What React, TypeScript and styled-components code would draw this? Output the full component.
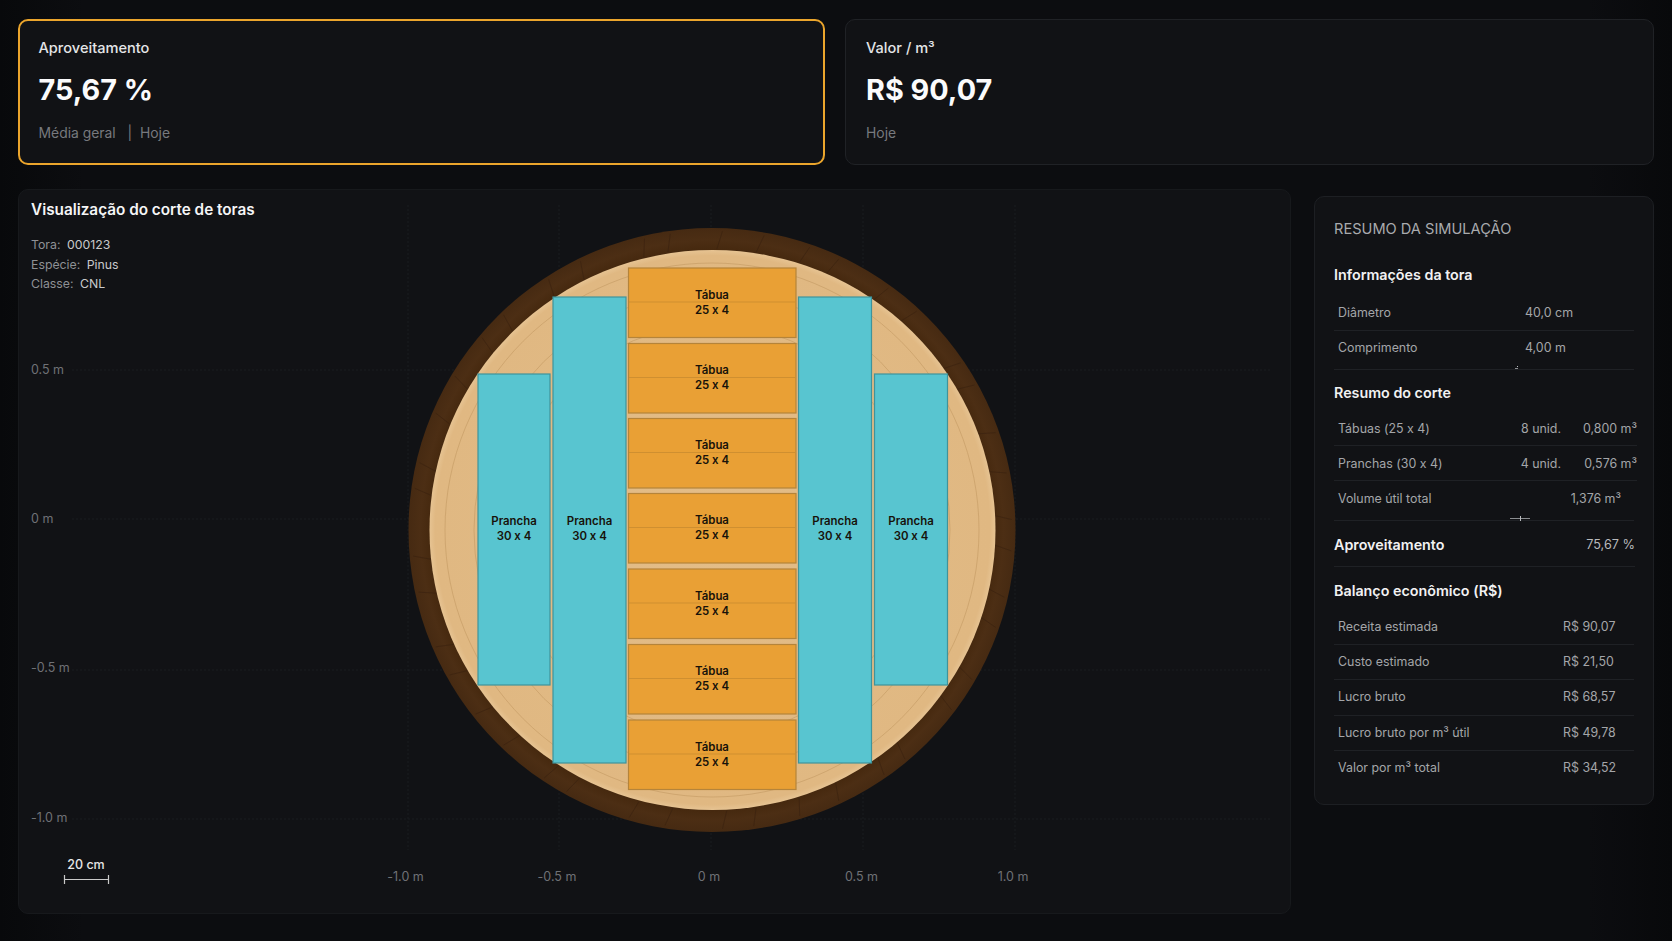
import React from 'react';
import styled, { createGlobalStyle } from 'styled-components';

const FONT = "Inter, 'Liberation Sans', sans-serif";

const GlobalStyle = createGlobalStyle`
  html, body {
    margin: 0;
    height: 100%;
    background: #0a0b0d;
    overflow: hidden;
  }
`;

const CX = 712;
const CY = 530;

const TABUAS = [268, 343.5, 418.5, 493.5, 569, 644.5, 720];
const PRANCHAS = [
  { x: 478, y: 374, w: 72, h: 311 },
  { x: 553, y: 297, w: 73, h: 466 },
  { x: 798.5, y: 297, w: 73, h: 466 },
  { x: 874.5, y: 374, w: 73, h: 311 },
];
const H_GRID = [
  { y: 370, ly: 371, label: '0.5 m' },
  { y: 519, ly: 520, label: '0 m' },
  { y: 670, ly: 669, label: '-0.5 m' },
  { y: 819, ly: 818.5, label: '-1.0 m' },
];
const V_GRID = [
  { x: 408, lx: 405.5, label: '-1.0 m' },
  { x: 559, lx: 557, label: '-0.5 m' },
  { x: 711, lx: 709, label: '0 m' },
  { x: 863, lx: 861.5, label: '0.5 m' },
  { x: 1015, lx: 1013, label: '1.0 m' },
];
// bark plates are uneven, so the joints are spaced by a repeating step list
const BARK_STEPS = [9, 6, 11, 7, 13, 5, 10, 8];
const BARK_TICKS = (() => {
  const out: number[] = [];
  let deg = 3;
  for (let i = 0; deg < 360; i++) {
    out.push(deg);
    deg += BARK_STEPS[i % BARK_STEPS.length];
  }
  return out;
})();

const rad = (deg: number) => (deg * Math.PI) / 180;

const App: React.FC = () => (
  <Page>
    <GlobalStyle />
    <TopRow>
      <StatCard $active>
        <StatLabel>Aproveitamento</StatLabel>
        <StatValue>75,67 %</StatValue>
        <StatHint>Média geral &nbsp;&nbsp;| &nbsp;Hoje</StatHint>
      </StatCard>
      <StatCard>
        <StatLabel>Valor / m³</StatLabel>
        <StatValue>R$ 90,07</StatValue>
        <StatHint>Hoje</StatHint>
      </StatCard>
    </TopRow>

    <BottomRow>
      <ChartPanel>
        <ChartSvg viewBox="18 189 1273 725">
          <defs>
            <radialGradient id="bark" cx="50%" cy="50%" r="50%">
              <stop offset="93%" stopColor="#46290f" />
              <stop offset="96%" stopColor="#4c2e14" />
              <stop offset="100%" stopColor="#462a12" />
            </radialGradient>
            <radialGradient id="wood" cx="50%" cy="50%" r="50%">
              <stop offset="0%" stopColor="#e3bd88" />
              <stop offset="98%" stopColor="#e0b882" />
              <stop offset="100%" stopColor="#e6c392" />
            </radialGradient>
          </defs>

          {H_GRID.map((g) => (
            <g key={g.y}>
              <GridLine x1={72} x2={1270} y1={g.y} y2={g.y} />
              <AxisLabel x={31} y={g.ly} dominantBaseline="middle">{g.label}</AxisLabel>
            </g>
          ))}
          {V_GRID.map((g) => (
            <g key={g.x}>
              <GridLine x1={g.x} x2={g.x} y1={205} y2={850} />
              <AxisLabel x={g.lx} y={877.5} textAnchor="middle" dominantBaseline="middle">{g.label}</AxisLabel>
            </g>
          ))}

          <ellipse cx={CX} cy={CY} rx={303.5} ry={302} fill="url(#bark)" />
          {BARK_TICKS.map((deg) => (
            <BarkTick
              key={deg}
              x1={CX + Math.cos(rad(deg)) * 282}
              y1={CY + Math.sin(rad(deg)) * 281}
              x2={CX + Math.cos(rad(deg + 1)) * 300}
              y2={CY + Math.sin(rad(deg + 1)) * 299}
            />
          ))}
          <ellipse cx={CX + 0.5} cy={CY} rx={283} ry={280} fill="url(#wood)" />
          <WoodRing cx={CX} cy={CY} r={267} />
          <WoodRing cx={CX} cy={CY} r={238} />
          <WoodRing cx={CX} cy={CY} r={205} />

          {TABUAS.map((y) => (
            <g key={y}>
              <Tabua x={628.5} y={y} width={167.5} height={69.5} />
              <BoardSeam x1={629} x2={795.5} y1={y + 34} y2={y + 34} />
              <BoardText x={712} y={y + 27.5} textAnchor="middle" dominantBaseline="middle">Tábua</BoardText>
              <BoardText x={712} y={y + 42.5} textAnchor="middle" dominantBaseline="middle">25 x 4</BoardText>
            </g>
          ))}
          {PRANCHAS.map((p) => (
            <g key={p.x}>
              <Prancha x={p.x} y={p.y} width={p.w} height={p.h} />
              <BoardText x={p.x + p.w / 2} y={522} textAnchor="middle" dominantBaseline="middle">Prancha</BoardText>
              <BoardText x={p.x + p.w / 2} y={537} textAnchor="middle" dominantBaseline="middle">30 x 4</BoardText>
            </g>
          ))}

          <ScaleText x={86} y={866} textAnchor="middle" dominantBaseline="middle">20 cm</ScaleText>
          <ScaleLine d="M64.5 875v9M64.5 879.5H108.5M108.5 875v9" />
        </ChartSvg>

        <ChartTitle>Visualização do corte de toras</ChartTitle>
        <MetaList>
          <MetaLine><span>Tora:</span> 000123</MetaLine>
          <MetaLine><span>Espécie:</span> Pinus</MetaLine>
          <MetaLine><span>Classe:</span> CNL</MetaLine>
        </MetaList>
      </ChartPanel>

      <SidePanel>
        <SideTitle>RESUMO DA SIMULAÇÃO</SideTitle>

        <SectionTitle $top={26} $bottom={11}>Informações da tora</SectionTitle>
        <Row $kind="info"><Cell>Diâmetro</Cell><Cell>40,0 cm</Cell></Row>
        <Row $kind="info" $height={39}>
          <Cell>Comprimento</Cell><Cell>4,00 m</Cell>
          <Glitch $width={3} />
        </Row>

        <SectionTitle $top={13} $bottom={8}>Resumo do corte</SectionTitle>
        <Row $kind="cut"><Cell>Tábuas (25 x 4)</Cell><Cell $end>8 unid.</Cell><Cell $end>0,800 m³</Cell></Row>
        <Row $kind="cut"><Cell>Pranchas (30 x 4)</Cell><Cell $end>4 unid.</Cell><Cell $end>0,576 m³</Cell></Row>
        <Row $kind="total" $height={40}>
          <Cell>Volume útil total</Cell><Cell $end>1,376 m³</Cell>
          <Glitch $width={20} />
        </Row>
        <HighlightRow>
          <HighlightLabel>Aproveitamento</HighlightLabel>
          <HighlightValue>75,67 %</HighlightValue>
        </HighlightRow>

        <SectionTitle $top={14} $bottom={9}>Balanço econômico (R$)</SectionTitle>
        <Row $kind="money"><Cell>Receita estimada</Cell><Cell>R$ 90,07</Cell></Row>
        <Row $kind="money"><Cell>Custo estimado</Cell><Cell>R$ 21,50</Cell></Row>
        <Row $kind="money" $height={36}><Cell>Lucro bruto</Cell><Cell>R$ 68,57</Cell></Row>
        <Row $kind="money"><Cell>Lucro bruto por m³ útil</Cell><Cell>R$ 49,78</Cell></Row>
        <Row $kind="money" $last><Cell>Valor por m³ total</Cell><Cell>R$ 34,52</Cell></Row>
      </SidePanel>
    </BottomRow>
  </Page>
);

const Page = styled.div`
  width: 1672px;
  height: 941px;
  box-sizing: border-box;
  padding: 19px 18px 0;
  font-family: ${FONT};
  font-feature-settings: 'calt' 0;
  background: linear-gradient(90deg, #08090b 0, #0c0d10 5%, #0c0d10 95%, #08090b 100%);
`;

const TopRow = styled.div`
  display: grid;
  grid-template-columns: 807px 809px;
  column-gap: 20px;
  height: 146px;
`;

const StatCard = styled.div<{ $active?: boolean }>`
  box-sizing: border-box;
  height: 146px;
  padding: ${(p) => (p.$active ? '17px 18.5px' : '18px 20px')};
  background: #111215;
  border: ${(p) => (p.$active ? '2px solid #eba52c' : '1px solid #202226')};
  border-radius: 10px;
`;

const StatLabel = styled.div`
  font-size: 14.6px;
  font-weight: 500;
  line-height: 20px;
  color: #e4e5e7;
`;

const StatValue = styled.div`
  margin-top: 12px;
  font-size: 28.8px;
  font-weight: 700;
  line-height: 40px;
  color: #fbfbfc;
`;

const StatHint = styled.div`
  margin-top: 13px;
  font-size: 13.9px;
  line-height: 20px;
  color: #77797e;
`;

const BottomRow = styled.div`
  display: flex;
  align-items: flex-start;
  gap: 23px;
  margin-top: 24px;
`;

const ChartPanel = styled.section`
  position: relative;
  box-sizing: border-box;
  width: 1273px;
  height: 725px;
  padding: 10px 12px;
  background: #111215;
  border: 1px solid #17191c;
  border-radius: 10px;
`;

const ChartSvg = styled.svg`
  position: absolute;
  top: -1px;
  left: -1px;
  width: 1273px;
  height: 725px;
`;

const GridLine = styled.line`
  stroke: #1a1c20;
  stroke-width: 1;
  stroke-dasharray: 2 2;
`;

const AxisLabel = styled.text`
  font-family: ${FONT};
  font-size: 12.5px;
  fill: #6f7175;
`;

const BarkTick = styled.line`
  stroke: #3a2210;
  stroke-width: 1;
  opacity: 0.6;
`;

const WoodRing = styled.circle`
  fill: none;
  stroke: #c39a63;
  stroke-width: 1;
  opacity: 0.6;
`;

const Tabua = styled.rect`
  fill: #e9a035;
  stroke: #b5843a;
  stroke-width: 1.2;
`;

const BoardSeam = styled.line`
  stroke: #cf8f30;
  stroke-width: 1;
`;

const Prancha = styled.rect`
  fill: #58c5d0;
  stroke: #3f939b;
  stroke-width: 1.2;
`;

const BoardText = styled.text`
  font-family: ${FONT};
  font-size: 11.4px;
  font-weight: 600;
  fill: #17120a;
`;

const ScaleText = styled.text`
  font-family: ${FONT};
  font-size: 12.5px;
  font-weight: 500;
  fill: #e6e6e6;
`;

const ScaleLine = styled.path`
  fill: none;
  stroke: #c9c9c9;
  stroke-width: 1.2;
`;

const ChartTitle = styled.h2`
  position: relative;
  margin: 0;
  font-size: 15.3px;
  font-weight: 600;
  line-height: 20px;
  color: #f5f5f6;
`;

const MetaList = styled.div`
  position: relative;
  margin-top: 15px;
`;

const MetaLine = styled.div`
  font-size: 12.3px;
  line-height: 19.5px;
  color: #c8c9cb;

  span {
    color: #8e9094;
    margin-right: 3px;
  }
`;

const SidePanel = styled.aside`
  box-sizing: border-box;
  width: 340px;
  height: 609px;
  margin-top: 7px;
  padding: 22px 19px 0;
  background: #111215;
  border: 1px solid #1d1f23;
  border-radius: 10px;
`;

const SideTitle = styled.h2`
  margin: 0;
  font-size: 14.6px;
  font-weight: 400;
  line-height: 20px;
  color: #a9abae;
`;

const SectionTitle = styled.h3<{ $top: number; $bottom: number }>`
  margin: ${(p) => p.$top}px 0 ${(p) => p.$bottom}px;
  font-size: 14.3px;
  font-weight: 600;
  line-height: 20px;
  color: #f1f1f2;
`;

const ROW_COLUMNS = {
  info: '187px 1fr',
  cut: '1fr 60px 76px',
  total: '1fr 90px',
  money: '1fr 50px',
};

const ROW_END_PADDING = { info: 0, cut: 0, total: 13, money: 21 };
const ROW_TOP_PADDING = { info: 8, cut: 9, total: 9, money: 8 };

const Row = styled.div<{ $kind: keyof typeof ROW_COLUMNS; $height?: number; $last?: boolean }>`
  position: relative;
  box-sizing: border-box;
  display: grid;
  grid-template-columns: ${(p) => ROW_COLUMNS[p.$kind]};
  height: ${(p) => p.$height ?? 35}px;
  padding: ${(p) => ROW_TOP_PADDING[p.$kind]}px ${(p) => ROW_END_PADDING[p.$kind]}px 0 4px;
  margin-right: ${(p) => (p.$kind === 'cut' ? '-3px' : '0')};
  border-bottom: 1px solid ${(p) => (p.$last ? 'transparent' : '#1f2125')};
  font-size: 12.4px;
  line-height: 18px;
  color: #a4a6a9;
`;

const Cell = styled.span<{ $end?: boolean }>`
  text-align: ${(p) => (p.$end ? 'right' : 'left')};
  white-space: nowrap;
`;

const Glitch = styled.i<{ $width: number }>`
  position: absolute;
  left: ${(p) => (p.$width > 5 ? 176 : 181)}px;
  bottom: ${(p) => (p.$width > 5 ? 1 : 0)}px;
  width: ${(p) => p.$width}px;
  height: 1px;
  background: #8b8d90;

  &::after {
    content: '';
    position: absolute;
    left: 50%;
    top: -2px;
    width: 1px;
    height: ${(p) => (p.$width > 5 ? 5 : 1)}px;
    background: #b9bbbe;
  }
`;

const HighlightRow = styled.div`
  box-sizing: border-box;
  display: flex;
  justify-content: space-between;
  height: 46px;
  padding-top: 14px;
  margin-right: -1px;
  border-bottom: 1px solid #1f2125;
  line-height: 20px;
`;

const HighlightLabel = styled.span`
  font-size: 14.3px;
  font-weight: 600;
  color: #f1f1f2;
`;

const HighlightValue = styled.span`
  font-size: 12.7px;
  color: #b9babd;
`;

export default App;
